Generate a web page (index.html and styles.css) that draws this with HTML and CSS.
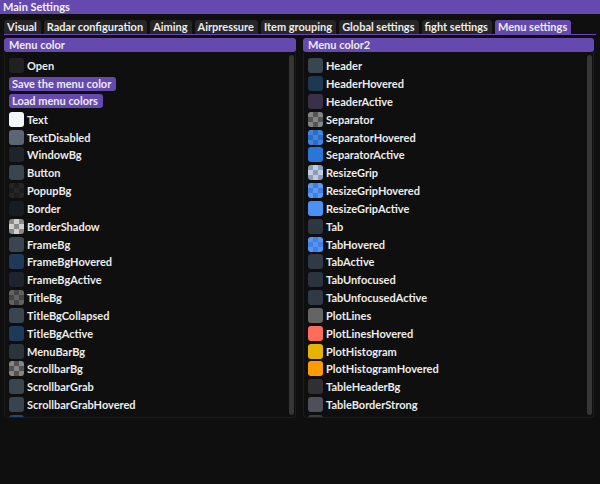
FILE: index.html
```html
<!DOCTYPE html>
<html>
<head>
<meta charset="utf-8">
<link rel="stylesheet" href="styles.css">
</head>
<body>
<div class="app">
  <div class="titlebar">Main Settings</div>
  <div class="tabs">
    <div class="tab">Visual</div>
    <div class="tab">Radar configuration</div>
    <div class="tab">Aiming</div>
    <div class="tab">Airpressure</div>
    <div class="tab">Item grouping</div>
    <div class="tab">Global settings</div>
    <div class="tab">fight settings</div>
    <div class="tab active">Menu settings</div>
  </div>
  <div class="columns">
    <div class="col col-left">
      <div class="header">Menu color</div>
      <div class="child">
        <div class="list">
          <div class="row"><span class="sw" style="background:#212121"></span>Open</div>
          <div class="row"><span class="btn">Save the menu color</span></div>
          <div class="row"><span class="btn">Load menu colors</span></div>
          <div class="row"><span class="sw" style="background:#f3f5f9"></span>Text</div>
          <div class="row"><span class="sw" style="background:#5b6672"></span>TextDisabled</div>
          <div class="row"><span class="sw" style="background:#1f242a"></span>WindowBg</div>
          <div class="row"><span class="sw" style="background:#394650"></span>Button</div>
          <div class="row"><span class="sw ck" style="--a:#1c1c1c;--b:#262626"></span>PopupBg</div>
          <div class="row"><span class="sw" style="background:#161b24"></span>Border</div>
          <div class="row"><span class="sw ck" style="--a:#cfcfcf;--b:#8a8a8a"></span>BorderShadow</div>
          <div class="row"><span class="sw" style="background:#394650"></span>FrameBg</div>
          <div class="row"><span class="sw" style="background:#1f3a57"></span>FrameBgHovered</div>
          <div class="row"><span class="sw" style="background:#1d242d"></span>FrameBgActive</div>
          <div class="row"><span class="sw ck" style="--a:#454545;--b:#626262"></span>TitleBg</div>
          <div class="row"><span class="sw" style="background:#394650"></span>TitleBgCollapsed</div>
          <div class="row"><span class="sw" style="background:#1d3a5a"></span>TitleBgActive</div>
          <div class="row"><span class="sw" style="background:#2b333d"></span>MenuBarBg</div>
          <div class="row"><span class="sw ck" style="--a:#525252;--b:#858585"></span>ScrollbarBg</div>
          <div class="row"><span class="sw" style="background:#394650"></span>ScrollbarGrab</div>
          <div class="row"><span class="sw" style="background:#38434e"></span>ScrollbarGrabHovered</div>
          <div class="row"><span class="sw" style="background:#1c4777"></span></div>
        </div>
        <div class="scroll"></div>
      </div>
    </div>
    <div class="col col-right">
      <div class="header">Menu color2</div>
      <div class="child">
        <div class="list">
          <div class="row"><span class="sw" style="background:#394650"></span>Header</div>
          <div class="row"><span class="sw" style="background:#1f3852"></span>HeaderHovered</div>
          <div class="row"><span class="sw" style="background:#3a3049"></span>HeaderActive</div>
          <div class="row"><span class="sw ck" style="--a:#555555;--b:#858585"></span>Separator</div>
          <div class="row"><span class="sw ck" style="--a:#2b6dc2;--b:#4384dc"></span>SeparatorHovered</div>
          <div class="row"><span class="sw" style="background:#2a76d6"></span>SeparatorActive</div>
          <div class="row"><span class="sw ck" style="--a:#c2cde0;--b:#8c9dbb"></span>ResizeGrip</div>
          <div class="row"><span class="sw ck" style="--a:#3f7fe0;--b:#5e98f2"></span>ResizeGripHovered</div>
          <div class="row"><span class="sw" style="background:#4d8ff5"></span>ResizeGripActive</div>
          <div class="row"><span class="sw" style="background:#2e3640"></span>Tab</div>
          <div class="row"><span class="sw ck" style="--a:#3f82e6;--b:#5893ef"></span>TabHovered</div>
          <div class="row"><span class="sw" style="background:#2f3a46"></span>TabActive</div>
          <div class="row"><span class="sw" style="background:#2b343e"></span>TabUnfocused</div>
          <div class="row"><span class="sw" style="background:#2f3a46"></span>TabUnfocusedActive</div>
          <div class="row"><span class="sw" style="background:#646464"></span>PlotLines</div>
          <div class="row"><span class="sw" style="background:#ff6d5a"></span>PlotLinesHovered</div>
          <div class="row"><span class="sw" style="background:#e5b300"></span>PlotHistogram</div>
          <div class="row"><span class="sw" style="background:#ff9a00"></span>PlotHistogramHovered</div>
          <div class="row"><span class="sw" style="background:#303033"></span>TableHeaderBg</div>
          <div class="row"><span class="sw" style="background:#4f4f59"></span>TableBorderStrong</div>
          <div class="row"><span class="sw" style="background:#3b3b40"></span></div>
        </div>
        <div class="scroll"></div>
      </div>
    </div>
  </div>
</div>
</body>
</html>
```

FILE: styles.css
```css
html, body {
  margin: 0;
  padding: 0;
  background: #0f0f0f;
}
body {
  width: 600px;
  height: 484px;
  overflow: hidden;
  font-family: Lato, "Open Sans", "DejaVu Sans", sans-serif;
  font-weight: 700;
  font-size: 11px;
  color: #ececec;
}
.app {
  display: flex;
  flex-direction: column;
}
.titlebar {
  height: 14px;
  line-height: 14px;
  padding-left: 3px;
  background: #6649ae;
  color: #f2f2f2;
}
.tabs {
  display: flex;
  gap: 3px;
  margin: 6px 4px 0 4px;
  border-bottom: 1px solid #6649ae;
}
.tab {
  height: 14px;
  line-height: 14px;
  padding: 0 4px 0 3px;
  background: #262626;
  border-radius: 3px 3px 0 0;
}
.tab.active {
  background: #6649ae;
}
.columns {
  display: flex;
  gap: 7px;
  margin: 3px 6px 0 4px;
}
.col-left {
  width: 292px;
}
.col-right {
  width: 291px;
}
.col {
  display: flex;
  flex-direction: column;
}
.header {
  height: 14px;
  line-height: 14px;
  padding-left: 5px;
  background: #6649ae;
  border-radius: 3px;
}
.child {
  height: 366px;
  box-sizing: border-box;
  border: 1px solid #1c1c1c;
  border-top: none;
  border-radius: 0 0 4px 4px;
  display: flex;
  overflow: hidden;
}
.list {
  flex: 1;
  display: flex;
  flex-direction: column;
  gap: 2.84px;
  padding: 6.3px 0 0 4px;
  overflow: hidden;
}
.row {
  display: flex;
  align-items: center;
  height: 15px;
  flex-shrink: 0;
  white-space: nowrap;
}
.sw {
  width: 15px;
  height: 15px;
  border-radius: 3px;
  margin-right: 3px;
  flex-shrink: 0;
}
.ck {
  background: repeating-conic-gradient(var(--a) 0 25%, var(--b) 0 50%) 0 0 / 10px 10px;
}
.btn {
  height: 14px;
  line-height: 14px;
  padding: 0 5px 0 3px;
  background: #6649ae;
  border-radius: 3px;
}
.scroll {
  width: 5px;
  margin: 3px 1px 2px 0;
  background: #363636;
  border-radius: 3px;
  flex-shrink: 0;
}
```
